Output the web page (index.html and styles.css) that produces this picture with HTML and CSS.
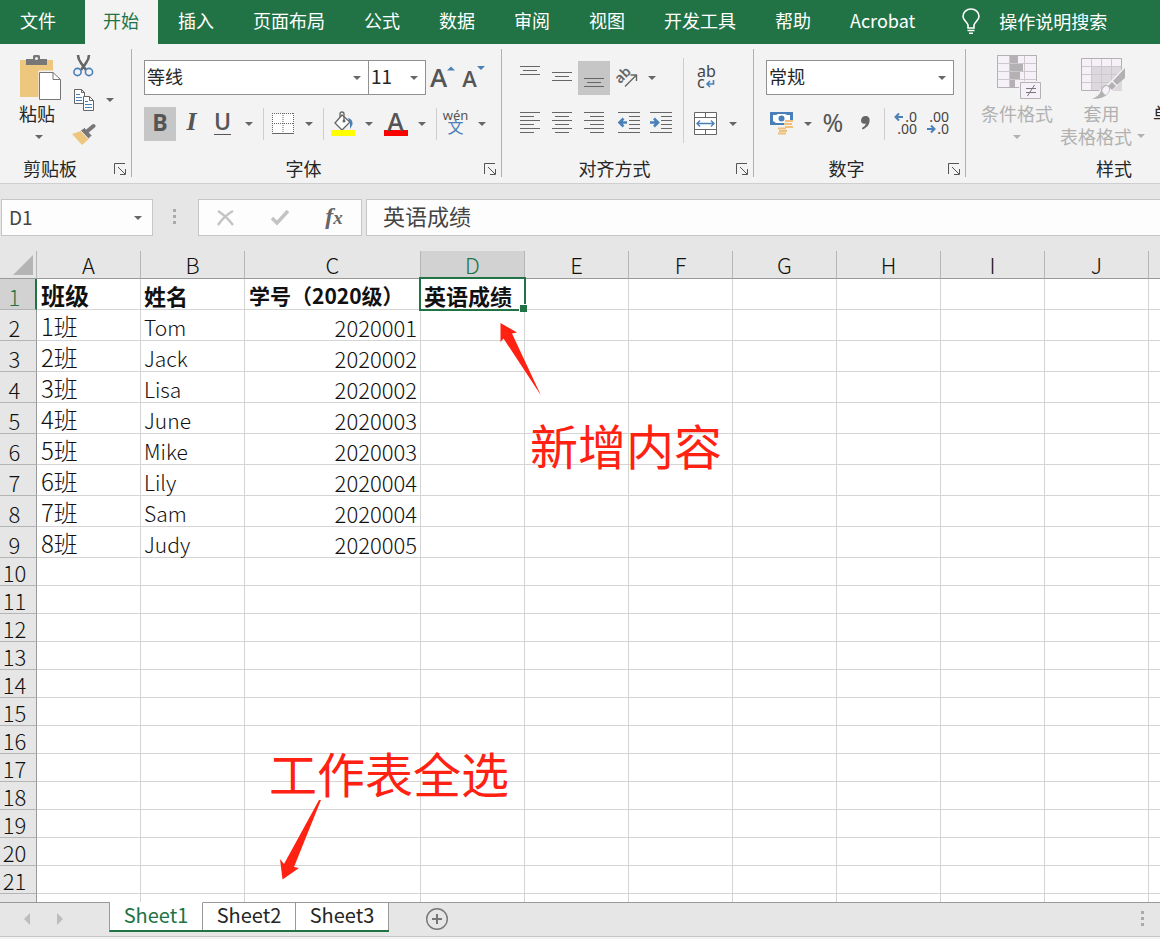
FILE: index.html
```html
<!DOCTYPE html>
<html lang="zh-CN">
<head>
<meta charset="utf-8">
<title>工作表</title>
<link rel="stylesheet" href="styles.css">
</head>
<body>
<nav class="tabs">
<button class="tab file">文件</button><button class="tab active">开始</button><button class="tab">插入</button><button class="tab">页面布局</button><button class="tab">公式</button><button class="tab">数据</button><button class="tab">审阅</button><button class="tab">视图</button><button class="tab">开发工具</button><button class="tab">帮助</button><button class="tab">Acrobat</button>
<button class="tab tell"><svg width="20" height="28" viewBox="0 0 20 28" fill="none" stroke="#fff" stroke-width="1.6"><path d="M7 20v-3C6 14 2 12 2 8.500a8 7.500 0 0 1 16 0C18 12 14 14 13 17v3z"/><path d="M6.500 22.500h7M8 25.200h4"/></svg>操作说明搜索</button>
</nav>

<header class="ribbon">
<section class="group clipboard">
<div class="body">
<button class="big paste">
<svg width="42" height="46" viewBox="0 0 42 46"><path d="M0 6h33v37H0z" fill="#eec77f"/><path d="M6 5h7V2.500Q13 1 14.500 1h4Q20 1 20 2.500V5h7v6H6z" fill="#777"/><circle cx="16.500" cy="4.500" r="1.500" fill="#f3f3f3"/><path d="M18.500 16.500h15l8 8v22h-23z" fill="#f3f3f3"/><path d="M19.500 18.500H33l7.500 7v20h-21z" fill="#fff" stroke="#777"/><path d="M33 18.500V25.500h7" fill="none" stroke="#777"/></svg>
<span>粘贴</span><i class="caret"></i></button>
<div class="stack">
<button class="tool" aria-label="剪切"><svg width="22" height="24" viewBox="0 0 22 24"><path d="M5 1q0 4 3 8l5 7M16 1q0 4-3 8l-5 7" fill="none" stroke="#666" stroke-width="2.600"/><circle cx="4.500" cy="18" r="3.600" fill="none" stroke="#4a80b8" stroke-width="1.600"/><circle cx="16" cy="18" r="3.600" fill="none" stroke="#4a80b8" stroke-width="1.600"/></svg></button>
<div class="row"><button class="tool" aria-label="复制"><svg width="22" height="24" viewBox="0 0 22 24" fill="#fff" stroke="#666"><path d="M1.500 1.500h7l3 3v11h-10zM8.500 1.500v3h3"/><path d="M3 6.500h4M3 9.500h6M3 12.500h6" stroke="#4a80b8"/><path d="M10.500 8.500h6l4 4v10h-10z"/><path d="M16.500 8.500v4h4" fill="none"/><path d="M12 13.500h3M12 16.500h7M12 19.500h7" stroke="#4a80b8"/></svg></button><button class="drop" aria-label="复制选项"><i class="caret"></i></button></div>
<button class="tool" aria-label="格式刷"><svg width="24" height="22" viewBox="0 0 24 22"><path d="M0 11l9-3 8 8-7 6z" fill="#eec77f"/><path d="M8.500 7.500l4-3 7.500 8-3.500 3.500z" fill="#777" stroke="#f3f3f3"/><path d="M15.500 8l6-5" stroke="#777" stroke-width="4" stroke-linecap="round"/></svg></button>
</div>
</div>
<div class="caption"><span>剪贴板</span><button class="launch" aria-label="剪贴板设置"><svg width="12" height="12" viewBox="0 0 12 12" fill="none" stroke="#555"><path d="M.5 11V.5H11M4 4l7 7M11.500 6v5.500H6"/></svg></button></div>
</section>

<section class="group font">
<div class="body col">
<div class="row top">
<label class="combo name"><select aria-label="字体"><option>等线</option></select><i class="caret"></i></label><label class="combo size"><select aria-label="字号"><option>11</option></select><i class="caret"></i></label>
<button class="tool grow" aria-label="增大字号"><b>A</b><svg width="8" height="5" viewBox="0 0 8 5"><path d="M0 4.500L4 .5l4 4z" fill="#4a80b8"/></svg></button>
<button class="tool shrink" aria-label="减小字号"><b>A</b><svg width="8" height="5" viewBox="0 0 8 5"><path d="M0 0l4 4 4-4z" fill="#4a80b8"/></svg></button>
</div>
<div class="row bottom">
<button class="tool on wide bold">B</button><button class="tool italic">I</button><button class="tool under"><span>U</span></button><button class="drop" aria-label="下划线选项"><i class="caret"></i></button><i class="sep"></i>
<button class="tool" aria-label="边框"><svg width="22" height="22" viewBox="0 0 22 22" fill="none" stroke="#666"><path d="M.5.5h21v20H.5z" fill="#fff" stroke="none"/><path d="M0 .5h22M0 10.500h22M.5 0v21M21.500 0v21M11 0v21" stroke-dasharray="1 1"/><path d="M0 20.500h22"/></svg></button><button class="drop" aria-label="边框选项"><i class="caret"></i></button><i class="sep"></i>
<button class="tool" aria-label="填充颜色"><svg width="24" height="26" viewBox="0 0 24 26"><path d="M11 4l8 7-8 8-7-7z" fill="#fff" stroke="#666" stroke-width="1.300"/><path d="M9 6V3q0-2 2-2t2 2v7" fill="none" stroke="#666" stroke-width="1.300"/><circle cx="13" cy="10" r="1.500" fill="#666"/><path d="M17 7q5 1 4.500 6.500L19 18V12z" fill="#4a80b8"/><path d="M0 19h24v6H0z" fill="#ff0"/></svg></button><button class="drop" aria-label="填充颜色选项"><i class="caret"></i></button>
<button class="tool color" aria-label="字体颜色"><b>A</b></button><button class="drop" aria-label="字体颜色选项"><i class="caret"></i></button><i class="sep"></i>
<button class="tool pinyin"><span>wén</span><em>文</em></button><button class="drop" aria-label="拼音选项"><i class="caret"></i></button>
</div>
</div>
<div class="caption"><span>字体</span><button class="launch" aria-label="字体设置"><svg width="12" height="12" viewBox="0 0 12 12" fill="none" stroke="#555"><path d="M.5 11V.5H11M4 4l7 7M11.500 6v5.500H6"/></svg></button></div>
</section>

<section class="group align">
<div class="body">
<div class="col">
<div class="row top">
<button class="tool wide" aria-label="顶端对齐"><svg width="20" height="24" viewBox="0 0 20 24" stroke="#666"><path d="M0 .5h20M3 4.500h14M0 8.500h20"/></svg></button><button class="tool wide" aria-label="垂直居中"><svg width="20" height="24" viewBox="0 0 20 24" stroke="#666"><path d="M0 6.500h20M3 10.500h14M0 14.500h20"/></svg></button><button class="tool wide on" aria-label="底端对齐"><svg width="20" height="24" viewBox="0 0 20 24" stroke="#666"><path d="M0 12.500h20M3 16.500h14M0 20.500h20"/></svg></button><button class="tool" aria-label="方向"><svg width="26" height="24" viewBox="0 0 26 24"><text class="ab" x="3" y="15" transform="rotate(-45 9 12)">ab</text><path d="M12 20.500L23 9.500M17.500 9H23.500v6" fill="none" stroke="#666" stroke-width="1.400"/></svg></button><button class="drop" aria-label="方向选项"><i class="caret"></i></button>
</div>
<div class="row bottom">
<button class="tool wide" aria-label="左对齐"><svg width="20" height="24" viewBox="0 0 20 24" stroke="#666"><path d="M0 .5h20M0 4.500h14M0 8.500h20M0 12.500h14M0 16.500h20M0 20.500h14"/></svg></button><button class="tool wide" aria-label="居中"><svg width="20" height="24" viewBox="0 0 20 24" stroke="#666"><path d="M0 .5h20M3 4.500h14M0 8.500h20M3 12.500h14M0 16.500h20M3 20.500h14"/></svg></button><button class="tool wide" aria-label="右对齐"><svg width="20" height="24" viewBox="0 0 20 24" stroke="#666"><path d="M0 .5h20M6 4.500h14M0 8.500h20M6 12.500h14M0 16.500h20M6 20.500h14"/></svg></button><button class="tool wide" aria-label="减少缩进"><svg width="28" height="24" viewBox="0 0 28 24" stroke="#666"><path d="M6 .5h22M17 4.500h11M17 8.500h11M17 12.500h11M17 16.500h11M6 20.500h22"/><path d="M7.500 10.500H15M11.500 6.500l-4 4 4 4" fill="none" stroke="#4a80b8" stroke-width="2.600"/></svg></button><button class="tool wide" aria-label="增加缩进"><svg width="28" height="24" viewBox="0 0 28 24" stroke="#666"><path d="M6 .5h22M17 4.500h11M17 8.500h11M17 12.500h11M17 16.500h11M6 20.500h22"/><path d="M6 10.500h7.500M10 6.500l4 4-4 4" fill="none" stroke="#4a80b8" stroke-width="2.600"/></svg></button>
</div>
</div>
<i class="sep tall"></i>
<div class="col">
<div class="row top"><button class="tool wide" aria-label="自动换行"><svg width="24" height="34" viewBox="0 0 24 34"><text class="wrap" x="3" y="16">ab</text><text class="wrap" x="3" y="27">c</text><path d="M19.500 19v4H13M16 20l-3 3 3 3" fill="none" stroke="#4a80b8" stroke-width="1.600"/></svg></button></div>
<div class="row bottom"><button class="tool wide" aria-label="合并后居中"><svg width="24" height="24" viewBox="0 0 24 24" stroke="#666" fill="#fff"><path d="M.5.5h22v22H.5z"/><path d="M0 5.500h23M0 17.500h23M11.500 0v5.500M11.500 17.500v5"/><path d="M3 11.500h17M6 8.500l-3 3 3 3M17 8.500l3 3-3 3" fill="none" stroke="#4a80b8" stroke-width="1.400"/></svg></button><button class="drop" aria-label="合并选项"><i class="caret"></i></button></div>
</div>
</div>
<div class="caption"><span>对齐方式</span><button class="launch" aria-label="对齐设置"><svg width="12" height="12" viewBox="0 0 12 12" fill="none" stroke="#555"><path d="M.5 11V.5H11M4 4l7 7M11.500 6v5.500H6"/></svg></button></div>
</section>

<section class="group number">
<div class="body col">
<div class="row top"><label class="combo fmt"><select aria-label="数字格式"><option>常规</option></select><i class="caret"></i></label></div>
<div class="row bottom">
<button class="tool" aria-label="会计数字格式"><svg width="24" height="26" viewBox="0 0 24 26"><path d="M0 1h23v13H0z" fill="#4a80b8"/><path d="M3 4h3l2-1h7l2 1h3v6h-2l-2 2H6l-3-2z" fill="#fff"/><circle cx="11.500" cy="7.500" r="3" fill="#4a80b8"/><path d="M14 9h9v9h-6v5H8v-7h6z" fill="#f3f3f3"/><path d="M15 10h8M14 13h8M15 16h8M8 17.500h8M9 20h8M8 22.500h8" stroke="#eec07a" stroke-width="1.800"/></svg></button><button class="drop" aria-label="货币选项"><i class="caret"></i></button><button class="tool percent">%</button><button class="tool" aria-label="千位分隔样式"><svg width="12" height="18" viewBox="0 0 12 18"><path d="M5.500 1C9 1 10 3.500 9.500 6.500 9 10.500 6 13 2.500 14.500L2 13q3.500-2 4-4.500C3 9.500 1 8 1 5.500 1 3 3 1 5.500 1z" fill="#666"/></svg></button><i class="sep"></i>
<button class="tool wide" aria-label="增加小数位数"><svg width="28" height="34" viewBox="0 0 28 34"><path d="M5 10h8M9 6.500L5.500 10 9 13.500" fill="none" stroke="#4a80b8" stroke-width="2"/><text class="dec" x="27" y="15">.0</text><text class="dec" x="27" y="27">.00</text></svg></button><button class="tool wide" aria-label="减少小数位数"><svg width="28" height="34" viewBox="0 0 28 34"><path d="M5 22h8M9 18.500l3.500 3.500L9 25.500" fill="none" stroke="#4a80b8" stroke-width="2"/><text class="dec" x="27" y="15">.00</text><text class="dec" x="27" y="27">.0</text></svg></button>
</div>
</div>
<div class="caption"><span>数字</span><button class="launch" aria-label="数字设置"><svg width="12" height="12" viewBox="0 0 12 12" fill="none" stroke="#555"><path d="M.5 11V.5H11M4 4l7 7M11.500 6v5.500H6"/></svg></button></div>
</section>

<section class="group styles">
<div class="body">
<button class="big cond" disabled>
<svg width="44" height="46" viewBox="0 0 44 46" stroke="#b4b1b4"><path d="M.5 1.500h39v32H.5z" fill="#f6f1f8"/><path d="M12.500 1v33M27.500 1v33M0 9.500h40M0 17.500h40M0 25.500h40" stroke="#ccc8cc"/><path d="M13 2h8v7h-8zM13 10h13v7H13zM13 18h10v7H13zM13 26h5v7h-5z" fill="#b4b1b4" stroke="none"/><path d="M.5 1.500h39v32H.5z" fill="none"/><path d="M22 27h22v18H22z" fill="#f3f3f3" stroke="none"/><path d="M23.500 28.500h20v16h-20z" fill="#f6f1f8"/><path d="M29 34.500h10M29 38.500h10M37.500 31l-7 11" stroke="#777"/></svg>
<span>条件格式</span><i class="caret"></i></button>
<button class="big table" disabled>
<svg width="46" height="46" viewBox="0 0 46 46"><path d="M.5 4.500h40v32H.5z" fill="#f6f1f8"/><path d="M11 12h30v25H11z" fill="#ddd8dd"/><path d="M10.500 4v32M20.500 4v32M30.500 4v32M0 12.500h40M0 20.500h40M0 28.500h40" stroke="#ccc8cc"/><path d="M40.500 20V4.500H.5v32H18" fill="none" stroke="#b4b1b4"/><path d="M44 12v12L30 38q-4 9-20 8 8-4 9-10l10-8z" fill="#f3f3f3"/><path d="M44 14v10l-8 7-4-4zM31 28l4 4-4 4-4-4z" fill="#b4b1b4"/><path d="M11 45q8-3 9-9 1-5 6-5 4 1 3 5-3 9-18 9z" fill="#b4b1b4"/><path d="M21 37q1-5 5-5 3 1 2 5-1 3-4 4z" fill="#f6f1f8"/></svg>
<span>套用</span><span class="second">表格格式<i class="caret"></i></span></button>
<button class="big cell"><span>单元格</span></button>
</div>
<div class="caption"><span>样式</span></div>
</section>
</header>

<div class="formula">
<label class="namebox"><input value="D1" aria-label="名称框"><i class="caret"></i></label>
<svg class="dots" width="4" height="18" viewBox="0 0 4 18" fill="#aaa"><path d="M0 0h3v3H0zM0 6h3v3H0zM0 12h3v3H0z"/></svg>
<div class="actions">
<button aria-label="取消"><svg width="20" height="18" viewBox="0 0 20 18"><path d="M2 2q8 5 15 14M17 2Q9 6 2 16" fill="none" stroke="#c3c3c3" stroke-width="2.400"/></svg></button>
<button aria-label="输入"><svg width="20" height="18" viewBox="0 0 20 18"><path d="M2 9l5 5L18 2" fill="none" stroke="#c3c3c3" stroke-width="3.500"/></svg></button>
<button class="fx" aria-label="插入函数"><i>f</i><i class="x">x</i></button>
</div>
<input class="entry" value="英语成绩" aria-label="编辑栏">
</div>

<main class="sheet">
<table>
<colgroup><col class="c-head"><col class="c"><col class="c"><col class="c-wide"><col class="c"><col class="c"><col class="c"><col class="c"><col class="c"><col class="c"><col class="c"><col></colgroup>
<thead><tr><th class="corner"><svg width="21" height="20" viewBox="0 0 21 20"><path d="M20 0v20H0z" fill="#b4b4b4"/></svg><th>A<th>B<th>C<th class="sel">D<th>E<th>F<th>G<th>H<th>I<th>J<th></tr></thead>
<tbody class="data">
<tr class="title"><th class="sel">1<td>班级<td>姓名<td>学号（2020级）<td class="cursor">英语成绩<td><td><td><td><td><td><td></tr>
<tr><th>2<td>1班<td>Tom<td>2020001<td><td><td><td><td><td><td><td></tr>
<tr><th>3<td>2班<td>Jack<td>2020002<td><td><td><td><td><td><td><td></tr>
<tr><th>4<td>3班<td>Lisa<td>2020002<td><td><td><td><td><td><td><td></tr>
<tr><th>5<td>4班<td>June<td>2020003<td><td><td><td><td><td><td><td></tr>
<tr><th>6<td>5班<td>Mike<td>2020003<td><td><td><td><td><td><td><td></tr>
<tr><th>7<td>6班<td>Lily<td>2020004<td><td><td><td><td><td><td><td></tr>
<tr><th>8<td>7班<td>Sam<td>2020004<td><td><td><td><td><td><td><td></tr>
<tr><th>9<td>8班<td>Judy<td>2020005<td><td><td><td><td><td><td><td></tr>
</tbody>
<tbody>
<tr><th>10<td><td><td><td><td><td><td><td><td><td><td></tr>
<tr><th>11<td><td><td><td><td><td><td><td><td><td><td></tr>
<tr><th>12<td><td><td><td><td><td><td><td><td><td><td></tr>
<tr><th>13<td><td><td><td><td><td><td><td><td><td><td></tr>
<tr><th>14<td><td><td><td><td><td><td><td><td><td><td></tr>
<tr><th>15<td><td><td><td><td><td><td><td><td><td><td></tr>
<tr><th>16<td><td><td><td><td><td><td><td><td><td><td></tr>
<tr><th>17<td><td><td><td><td><td><td><td><td><td><td></tr>
<tr><th>18<td><td><td><td><td><td><td><td><td><td><td></tr>
<tr><th>19<td><td><td><td><td><td><td><td><td><td><td></tr>
<tr><th>20<td><td><td><td><td><td><td><td><td><td><td></tr>
<tr><th>21<td><td><td><td><td><td><td><td><td><td><td></tr>
<tr><th><td><td><td><td><td><td><td><td><td><td><td></tr>
</tbody>
</table>
<svg class="arrow first" width="42" height="74" viewBox="0 0 42 74"><path d="M.5 0L17 9.500l-5 1L41 72.500 3.500 15.500.5 19z" fill="#ff2112"/></svg>
<p class="note first">新增内容</p>
<svg class="arrow second" width="44" height="80" viewBox="0 0 44 80"><path d="M2.500 79.500L0 59l4 5L39 0h2L14 67l5 1z" fill="#ff2112"/></svg>
<p class="note second">工作表全选</p>
</main>

<footer class="sheetbar">
<button class="nav" aria-label="上一个工作表"><svg width="8" height="12" viewBox="0 0 8 12"><path d="M7 0v12L1 6z" fill="#bdbdbd"/></svg></button><button class="nav" aria-label="下一个工作表"><svg width="8" height="12" viewBox="0 0 8 12"><path d="M1 0v12l6-6z" fill="#bdbdbd"/></svg></button>
<div class="sheets"><button class="current">Sheet1</button><button>Sheet2</button><button>Sheet3</button></div>
<button class="add" aria-label="新建工作表"><svg width="24" height="24" viewBox="0 0 24 24" fill="none" stroke="#777"><circle cx="12" cy="12" r="10.300" stroke-width="1.400"/><path d="M7 12h10M12 7v10" stroke-width="2"/></svg></button>
<svg class="dots" width="4" height="18" viewBox="0 0 4 18" fill="#aaa"><path d="M0 1h3v3H0zM0 7h3v3H0zM0 13h3v3H0z"/></svg>
</footer>
</body>
</html>
```
FILE: styles.css
```css
* { box-sizing: border-box; }
body {
  margin: 0; height: 100vh; display: flex; flex-direction: column; overflow: hidden;
  background: #e6e6e6; color: #262626;
  font: 18px/24px "Noto Sans CJK SC", "Noto Sans", sans-serif;
}
button, input, select { font: inherit; color: inherit; margin: 0; padding: 0; border: 0; background: none; outline: 0; }
svg { display: block; flex: none; }

.tabs { display: flex; flex: none; height: 44px; background: #217346; color: #fff; overflow: hidden; }
.tab { flex: none; padding: 0 19px 4px 20px; white-space: nowrap; }
.tab.file { width: 85px; text-align: left; }
.tab.active { background: #f3f3f3; color: #217346; padding: 0 19px 4px 18px; }
.tab.tell { display: flex; align-items: center; gap: 18px; padding-left: 27px; padding-bottom: 3px; }
.tell svg { margin-top: 3px; }

.ribbon { display: flex; flex: none; height: 140px; background: #f3f3f3; border-bottom: 1px solid #cfcfcf; overflow: hidden; }
.group { position: relative; flex: none; display: flex; flex-direction: column; height: 128px; margin-top: 5px; border-right: 1px solid #b1b1b1; }
.clipboard { width: 132px; }
.font { width: 370px; padding-left: 12px; }
.align { width: 252px; padding-left: 12px; }
.number { width: 212px; padding-left: 12px; }
.styles { width: 286px; padding-left: 10px; border: 0; }
.body { display: flex; flex: 1; }
.col { display: flex; flex-direction: column; }
.row { display: flex; align-items: center; }
.row.top { height: 35px; margin-top: 11px; }
.row.bottom { height: 34px; margin-top: 12px; }
.caption { display: flex; align-items: center; height: 24px; margin-bottom: -4px; padding-bottom: 1px; text-align: center; }
.caption span { flex: 1; margin-top: -2px; }
.font .caption, .align .caption, .number .caption { margin-left: -12px; }
.launch { width: 26px; padding: 1px 5px 0 9px; }
.clipboard .launch { width: 31px; padding-left: 14px; }

.tool { display: flex; align-items: center; justify-content: center; width: 31px; height: 34px; color: #555; }
.tool.wide { width: 32px; }
.tool.on { background: #c6c6c6; }
.drop { display: flex; align-items: center; justify-content: center; width: 22px; height: 34px; }
.caret { display: block; width: 0; height: 0; border: 4px solid transparent; border-top-color: #666; border-bottom: 0; }
.sep { width: 1px; height: 32px; margin: 0 3px; background: #cfcfcf; }
.sep.tall { height: 85px; margin: 9px 6px 0 9px; }

.big { display: flex; flex-direction: column; align-items: center; padding: 5px 0 0; white-space: nowrap; }
.big span { margin-top: 1px; }
.big .caret { margin-top: 10px; }
.big.paste { width: 54px; margin-left: 12px; }
.big.paste span { margin-right: 4px; }
.paste svg { margin-left: 3px; }
.stack { display: flex; flex-direction: column; width: 62px; margin-left: 2px; }
.stack .tool { height: 34px; }
.big.cond { width: 82px; }
.cond svg, .table svg { margin-left: 4px; }
.big.table { width: 91px; padding-right: 4px; }
.big:disabled { color: #b1b1b1; }
.big:disabled .caret { border-top-color: #b1b1b1; }
.big .second { display: flex; align-items: center; gap: 5px; margin: -1px 0 0; padding-left: 2px; }
.big .second .caret { margin-top: 0; }
.big.cell { margin-left: 4px; padding-top: 51px; }

.combo { position: relative; display: flex; height: 35px; border: 1px solid #919191; background: #fff; }
.combo select { appearance: none; width: 100%; padding: 0 20px 3px 2px; }
.combo .caret { position: absolute; right: 7px; top: 15px; }
.combo.name { width: 225px; }
.combo.size { width: 58px; margin-left: -1px; font-size: 19px; }
.combo.fmt { width: 188px; }
.grow, .shrink { align-items: flex-start; font: 26px/32px "Open Sans", sans-serif; }
.grow svg, .shrink svg { margin-top: 5px; }
.grow { margin-left: 1px; }
.shrink { font-size: 22px; line-height: 34px; }
.grow b, .shrink b { font-weight: 600; }
.bold { font: bold 23px/30px "Open Sans", sans-serif; padding-bottom: 4px; }
.italic { font: italic bold 26px/30px "Liberation Serif", serif; padding-bottom: 4px; }
.under { font: 600 23px/24px "Open Sans", sans-serif; padding-bottom: 2px; }
.under span { border-bottom: 1px solid #555; height: 24px; line-height: 20px; }
.color b { width: 24px; height: 24px; border-bottom: 6px solid #f00; font: 600 25px/18px "Open Sans", sans-serif; }
.pinyin { flex-direction: column; font: 13px/13px "Noto Sans", sans-serif; }
.pinyin em { font: 16px/16px "Noto Sans CJK SC", sans-serif; color: #4a80b8; margin-top: -4px; }
.pinyin span { margin-top: -5px; }
.ab { font: 600 14px "Noto Sans", sans-serif; fill: #666; }
.wrap { font: 16px "Noto Sans", sans-serif; fill: #444; }
.dec { font: 14px "Noto Sans", sans-serif; fill: #444; text-anchor: end; }
.percent { font: 25px/30px "Noto Sans", sans-serif; padding: 0 3px 4px 0; }

.formula { display: flex; flex: none; align-items: center; height: 67px; padding: 0 0 0 1px; color: #444; }
.namebox, .actions, .entry { height: 37px; border: 1px solid #c6c6c6; background: #fdfdfd; }
.namebox { display: flex; align-items: center; width: 152px; padding: 0 10px 0 7px; font-size: 19px; }
.namebox input { flex: 1; min-width: 0; padding-bottom: 2px; }
.formula .dots { margin: 0 21px 0 20px; }
.actions { display: flex; align-items: center; width: 164px; }
.actions button { flex: 1; display: flex; justify-content: center; }
.fx { color: #666; font: bold 24px/28px "Liberation Serif", serif; }
.fx .x { font-size: 19px; line-height: 32px; }
.entry { flex: 1; min-width: 0; margin-left: 4px; padding: 0 0 5px 16px; border-right: 0; font-size: 22px; }

.sheet { position: relative; flex: 1; min-height: 0; overflow: hidden; background: #fff; }
table { width: 100%; table-layout: fixed; border-collapse: separate; border-spacing: 0; font-size: 22px; line-height: 24px; color: #111; }
.c-head { width: 37px; }
.c { width: 104px; }
.c-wide { width: 176px; }
th, td { height: 28px; padding: 0; border: solid #d4d4d4; border-width: 0 1px 1px 0; font-weight: 300; vertical-align: bottom; white-space: nowrap; }
th { background: #e6e6e6; border-color: #b5b5b5; padding-bottom: 1px; }
tr > :last-child { border-right: 0; }
thead th { border-bottom-color: #999; padding-bottom: 2px; }
tbody th { border-right-color: #999; padding-right: 7px; }
th.corner { padding: 0 3px 3px 13px; }
th.sel { background: #d2d2d2; color: #217346; }
tbody th.sel { border-right: 2px solid #217346; padding-right: 6px; }
.data th, .data td { height: 31px; }
.data td { padding: 0 0 1px 3px; font-size: 21px; }
.data td:nth-child(2) { padding-left: 4px; padding-bottom: 2px; font-size: 24px; }
.data td:nth-child(4) { text-align: right; padding-right: 3px; font-size: 22px; }
.data .title td { text-align: left; font-weight: 700; padding-bottom: 2px; }
.data .title td:nth-child(3), .data .title td:nth-child(5) { font-size: 22px; }
.data .title td:nth-child(4) { font-size: 21px; padding-left: 4px; }
.cursor { position: relative; }
.cursor::before { content: ""; position: absolute; inset: -2px -2px -2px -2px; border: 2px solid #217346; }
.cursor::after { content: ""; position: absolute; right: -3px; bottom: -3px; width: 7px; height: 7px; background: #217346; border: solid #fff; border-width: 1px 0 0 1px; }

.note { position: absolute; margin: 0; color: #ff2112; font-size: 48px; line-height: 56px; white-space: nowrap; }
.note.first { left: 530px; top: 165px; }
.note.second { left: 269px; top: 493px; }
.arrow { position: absolute; }
.arrow.first { left: 500px; top: 72px; }
.arrow.second { left: 280px; top: 549px; }

.sheetbar { display: flex; flex: none; align-items: flex-start; height: 37px; border-top: 1px solid #999; border-bottom: 2px solid #f3f3f3; box-shadow: inset 0 -1px #c6c6c6; padding-left: 10px; }
.nav { display: flex; align-items: center; justify-content: center; width: 33px; height: 32px; }
.sheets { display: flex; margin: -1px 0 0 33px; border-bottom: 2px solid #217346; border-left: 1px solid #999; background: #fff; }
.sheets button { width: 93px; height: 28px; padding-bottom: 4px; border-right: 1px solid #999; border-top: 1px solid #999; font-size: 20px; line-height: 24px; }
.sheets .current { border-top-color: #fff; color: #217346; }
.add { margin: 4px auto 0 36px; }
.sheetbar .dots { margin: 7px 15px 0 0; }
```
